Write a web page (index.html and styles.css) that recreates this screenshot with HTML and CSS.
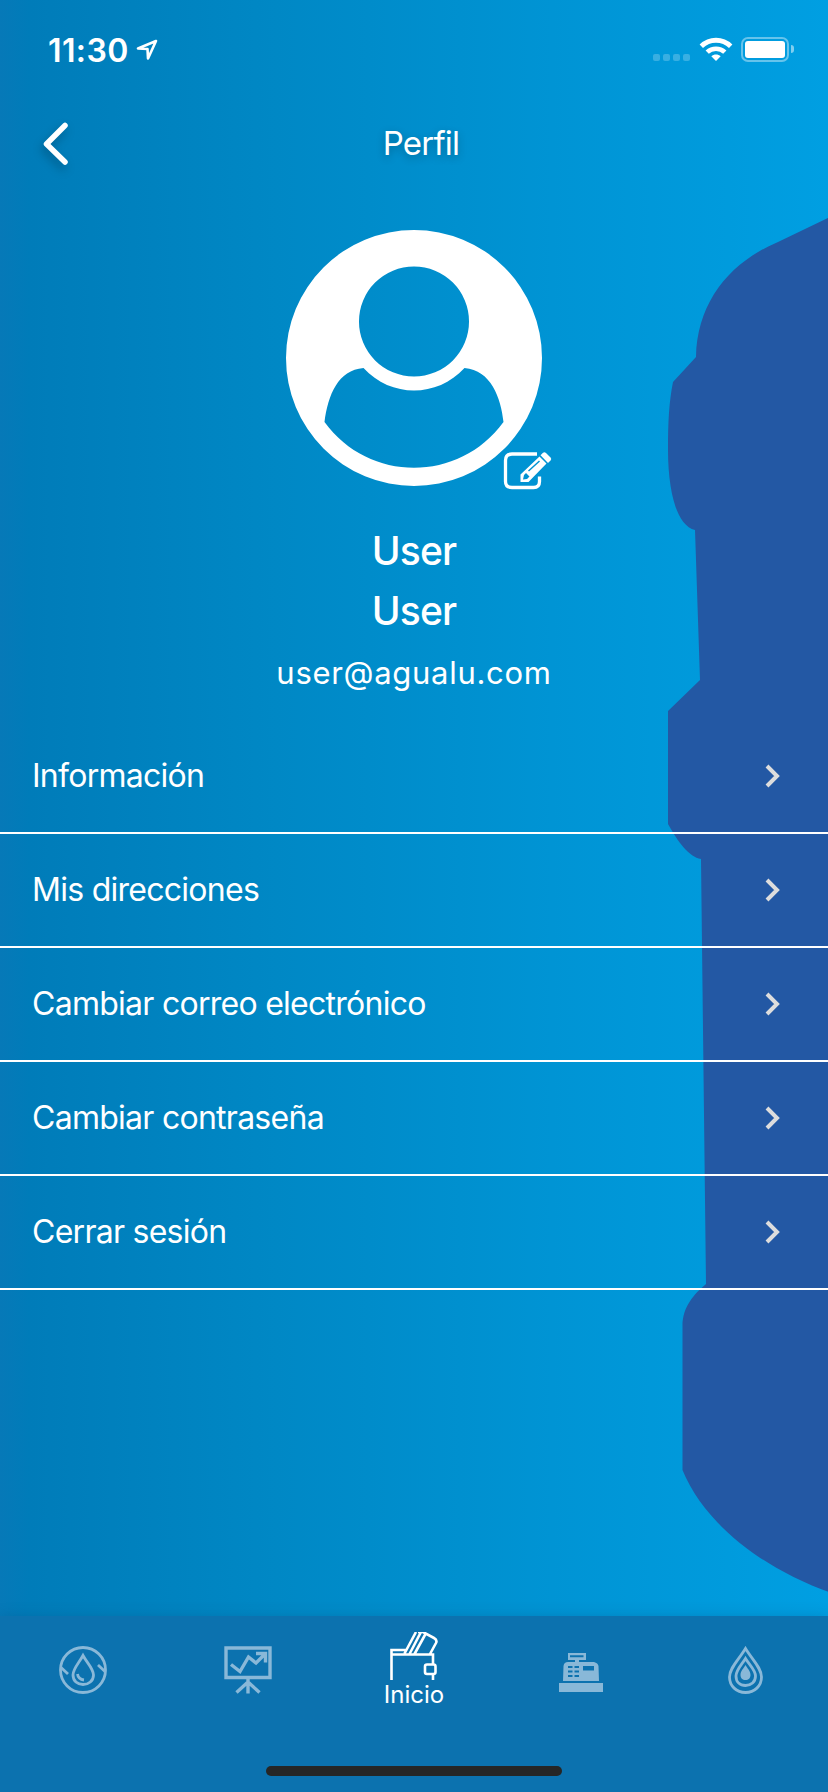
FILE: index.html
```html
<!DOCTYPE html>
<html lang="es">
<head>
    <meta charset="UTF-8">
    <meta name="viewport" content="width=device-width, initial-scale=1.0">
    <title>Perfil</title>
    <link rel="stylesheet" href="styles.css">
</head>
<body>

    <div class="screen">
        <!-- Silueta del fondo -->
        <svg class="silhouette" viewBox="0 0 828 1792">
            <path d="M832 216L778 242C730 262 697 302 696 357L673 382C669 402 668 422 668 450C668 492 677 526 695 530L700 680L668 711V824C678 842 689 857 701 859L706 1284C694 1294 682.500 1307 682.500 1326V1470C705 1525 765 1570 832 1593Z"/>
        </svg>

        <div class="status-bar">
            <div class="status-left">
                <span class="time">11:30</span>
                <svg class="location" width="22" height="22" viewBox="0 0 22 22">
                    <path d="M20 2L2 9.500L11.500 10L12 19.500Z"/>
                </svg>
            </div>
            <div class="status-right">
                <div class="signal"><i></i><i></i><i></i><i></i></div>
                <svg class="wifi" width="34" height="24" viewBox="0 0 34 24">
                    <path d="M2.300 9.300C10.500 1.200 23.500 1.200 31.700 9.300" fill="none" stroke="#fff" stroke-width="4.800"/>
                    <path d="M8.200 15.200C13 10.500 21 10.500 25.800 15.200" fill="none" stroke="#fff" stroke-width="4.600"/>
                    <path d="M17 24L12.300 19.300C15 17 19 17 21.700 19.300Z" fill="#fff"/>
                </svg>
                <div class="battery"><div class="battery-body"><div class="battery-level"></div></div><div class="battery-tip"></div></div>
            </div>
        </div>

        <header class="header">
            <svg class="back" width="28" height="46" viewBox="0 0 28 46">
                <path d="M23 4.500L4.500 23L23 41"/>
            </svg>
            <h1>Perfil</h1>
        </header>

        <section class="profile">
            <div class="avatar">
                <svg width="256" height="256" viewBox="0 0 256 256">
                    <path fill="#fff" fill-rule="evenodd" d="M128 0A128 128 0 1 1 128 256A128 128 0 1 1 128 0ZM128 36.500A55 55 0 1 0 128 146.500A55 55 0 1 0 128 36.500ZM77.500 138C105 168 151 168 178.500 138C205 140 215 168 217.500 192C173 253 83 253 38.500 192C42 165 52 140 77.500 138Z"/>
                </svg>
                <svg class="edit" width="50" height="40" viewBox="0 0 50 40">
                    <path d="M34 3H9Q2.500 3 2.500 9.500V30.500Q2.500 36.500 9 36.500H30.500Q36.500 36.500 36.500 30.500V25.500" fill="none" stroke="#fff" stroke-width="3.300"/>
                    <path fill="#fff" fill-rule="evenodd" d="M36.500 5.500L43.500 12.500L25.500 31H17.500V23.500ZM21 24L20 28.500L24 28L26.500 25.500L23 22ZM25 19.500L26 20.500L37 10.500L36 9.500Z"/>
                    <path fill="#fff" d="M37.500 4.300L40 1.800Q41.500 .8 43 2L47.500 6.500Q49 8 47.500 9.500L45 12Z"/>
                </svg>
            </div>
            <p class="name">User</p>
            <p class="name">User</p>
            <p class="email">user@agualu.com</p>
        </section>

        <nav class="menu">
            <a class="menu-item">Información<svg width="18" height="26" viewBox="0 0 18 26"><path d="M3 3L13 13L3 23"/></svg></a>
            <a class="menu-item">Mis direcciones<svg width="18" height="26" viewBox="0 0 18 26"><path d="M3 3L13 13L3 23"/></svg></a>
            <a class="menu-item">Cambiar correo electrónico<svg width="18" height="26" viewBox="0 0 18 26"><path d="M3 3L13 13L3 23"/></svg></a>
            <a class="menu-item">Cambiar contraseña<svg width="18" height="26" viewBox="0 0 18 26"><path d="M3 3L13 13L3 23"/></svg></a>
            <a class="menu-item">Cerrar sesión<svg width="18" height="26" viewBox="0 0 18 26"><path d="M3 3L13 13L3 23"/></svg></a>
        </nav>

        <footer class="tab-bar">
            <div class="tabs">
                <a class="tab">
                    <svg width="48" height="48" viewBox="0 0 48 48" fill="none" stroke="currentColor" stroke-width="2.800">
                        <circle cx="24" cy="24" r="22.500"/>
                        <path d="M24 9.500C20 17 14 22.500 14 29C14 35 18.500 38.500 24 38.500S34.500 35 34.500 29C34.500 22.500 28 17 24 9.500Z"/>
                        <path d="M18.500 28C19 31.500 21 33.500 25 34M1.500 21L9 28M39 19L46.500 26"/>
                    </svg>
                </a>
                <a class="tab">
                    <svg width="48" height="48" viewBox="0 0 48 48" fill="none" stroke="currentColor" stroke-width="3.400">
                        <path d="M2 2H46V31.500H2ZM24 32V47.500M24 36L12.500 46.500M24 36L35.500 46.500"/>
                        <path d="M7 18.500L16 25.500L24.500 11L32 17L41 8M32 7.500H41.500V16.500"/>
                    </svg>
                </a>
                <a class="tab active">
                    <svg width="48" height="48" viewBox="0 0 48 48" fill="none" stroke="currentColor" stroke-width="2.600">
                        <path d="M1.500 48V22.500H43V32M43 43V48M1.500 23V18H16M14.500 21.500L26 0M19.500 22L31 0M24.500 22L35.500 2M28 0H33L44 6Q47.500 8 46 11L40 22"/>
                        <rect x="35" y="32.500" width="10.500" height="9.500" rx="2"/>
                    </svg>
                    <span>Inicio</span>
                </a>
                <a class="tab">
                    <svg width="48" height="48" viewBox="0 0 48 48" fill="currentColor" fill-rule="evenodd">
                        <path d="M12 7H30V14H23V16H38Q42 17 42.500 20L43 35H7L7.500 20Q8 16 12 16H19V14H12ZM14 9.300V11.300H27.500V9.300ZM12 20V22H16.500V20ZM18.500 20V22H23V20ZM12 24.500V26.500H16.500V24.500ZM18.500 24.500V26.500H23V24.500ZM12 29V31H16.500V29ZM18.500 29V31H23V29ZM27 20V24.500H38V20Z"/>
                        <path d="M3 37H47V46H3Z"/>
                    </svg>
                </a>
                <a class="tab">
                    <svg width="48" height="48" viewBox="0 0 48 48" fill="none" stroke="currentColor" stroke-width="2.800">
                        <path d="M24.500 2.500C17.500 14 8.500 22 8.500 31C8.500 40 15.500 46.500 24.500 46.500S40.500 40 40.500 31C40.500 22 31.500 14 24.500 2.500Z"/>
                        <path d="M24.500 12.500C20.500 19 15 24 15 30C15 36 19 39.500 24.500 39.500S34.500 36 34.500 30C34.500 24 28.500 19 24.500 12.500Z"/>
                        <path fill="currentColor" stroke="none" d="M24.500 19C22.500 22.500 19.500 25 19.500 29C19.500 32 21.500 34 24.500 34S29.500 32 29.500 29C29.500 25 26.500 22.500 24.500 19Z"/>
                    </svg>
                </a>
            </div>
            <div class="home-indicator"></div>
        </footer>
    </div>

</body>
</html>
```

FILE: styles.css
```css
* {
    box-sizing: border-box;
}
body {
    margin: 0;
    font-family: Inter, "Liberation Sans", sans-serif;
    color: #fff;
}
h1, p {
    margin: 0;
}
svg {
    display: block;
    flex: none;
}
.screen {
    position: relative;
    display: flex;
    flex-direction: column;
    width: 828px;
    height: 1792px;
    overflow: hidden;
    background: linear-gradient(to right, #0679b8 0, #007cb9 30px, #0088c5 276px, #0094d4 552px, #009fe2 100%);
}
.silhouette {
    position: absolute;
    top: 0;
    left: 0;
    width: 828px;
    height: 1792px;
    overflow: visible;
    fill: #2358a4;
    filter: blur(0.7px);
}
.status-bar, .header, .profile, .menu, .tab-bar {
    position: relative;
}
.status-bar {
    display: flex;
    justify-content: space-between;
    height: 88px;
    padding: 37px 34px 0 48px;
}
.status-left {
    display: flex;
    height: 26px;
    align-items: center;
    gap: 7px;
}
.time {
    font-size: 32px;
    font-weight: 600;
    letter-spacing: 0.4px;
}
.location path {
    fill: none;
    stroke: #fff;
    stroke-width: 2.6;
    stroke-linejoin: round;
}
.status-right {
    display: flex;
    height: 24px;
}
.signal {
    display: flex;
    align-items: flex-end;
    gap: 3px;
    margin-right: 9px;
}
.signal i {
    width: 7px;
    height: 7px;
    border-radius: 2px;
    background: rgba(255, 255, 255, 0.22);
}
.wifi {
    margin-right: 8px;
}
.battery {
    display: flex;
    align-items: center;
    gap: 2px;
}
.battery-body {
    width: 48px;
    height: 25px;
    padding: 2px;
    border: 2px solid rgba(255, 255, 255, 0.4);
    border-radius: 7px;
}
.battery-level {
    height: 17px;
    border-radius: 3px;
    background: #fff;
}
.battery-tip {
    width: 3px;
    height: 8px;
    border-radius: 0 3px 3px 0;
    background: rgba(255, 255, 255, 0.5);
}
.header {
    display: flex;
    align-items: center;
    justify-content: center;
    height: 112px;
}
.header h1 {
    margin: 0 0 2px 14px;
    font-size: 33px;
    font-weight: 400;
    letter-spacing: -0.8px;
    text-shadow: 0 3px 8px rgba(0, 0, 0, 0.25);
}
.back {
    position: absolute;
    left: 42px;
    top: 33px;
    overflow: visible;
    filter: drop-shadow(-2px 5px 5px rgba(0, 0, 0, 0.25));
}
.back path {
    fill: none;
    stroke: #fff;
    stroke-width: 5.5;
    stroke-linecap: round;
    stroke-linejoin: round;
}
.profile {
    display: flex;
    flex-direction: column;
    align-items: center;
    height: 520px;
    padding-top: 30px;
}
.avatar {
    position: relative;
    margin-bottom: 35px;
}
.edit {
    position: absolute;
    left: 217px;
    top: 221px;
}
.name {
    font-size: 39px;
    font-weight: 500;
    line-height: 60px;
    letter-spacing: -0.8px;
}
.email {
    font-size: 31px;
    line-height: 64px;
    letter-spacing: 0.7px;
}
.menu-item {
    display: flex;
    align-items: center;
    justify-content: space-between;
    height: 114px;
    padding: 0 46px 1px 32px;
    border-bottom: 2px solid #fff;
    font-size: 32px;
    letter-spacing: -0.73px;
}
.menu-item path {
    fill: none;
    stroke: #ddd;
    stroke-width: 4;
}
.tab-bar {
    height: 176px;
    margin-top: auto;
    background: #0c72af;
    box-shadow: 0 0 12px rgba(0, 70, 120, 0.25);
}
.tabs {
    display: flex;
    height: 112px;
}
.tab {
    display: flex;
    flex: 1;
    flex-direction: column;
    align-items: center;
    padding-top: 30px;
    color: #89b8d8;
}
.tab.active {
    padding-top: 16px;
    color: #fff;
}
.tab span {
    font-size: 24px;
    line-height: 30px;
}
.home-indicator {
    width: 296px;
    height: 10px;
    margin: 38px auto 0;
    border-radius: 5px;
    background: #262626;
}
```
